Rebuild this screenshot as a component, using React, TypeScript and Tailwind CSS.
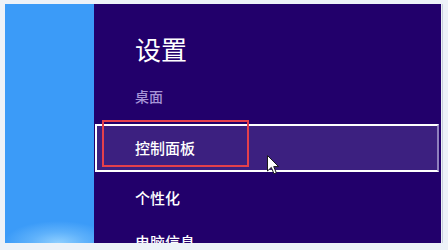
import React from "react";

export default function App() {
  return (
    <div
      className="relative w-[448px] h-[250px] overflow-hidden bg-[#edf2f8] pt-[4px] pl-[5px]"
      style={{ fontFamily: '"Noto Sans CJK SC", "Noto Sans", sans-serif' }}
    >
      <div className="flex w-[436px] h-[239px] overflow-hidden">
        <div className="w-[89px] shrink-0 bg-[#3b9bf8] bg-[radial-gradient(ellipse_55px_22px_at_60%_100%,#8fcfff_0%,#5eb1fb_50%,transparent_100%)]" />
        <div className="flex-1 flex flex-col bg-[#22006b] pt-[30px]">
          <div className="pl-[41px] text-[26px] leading-[30px] font-normal text-white">设置</div>
          <div className="mt-[22px] pl-[41px] text-[14px] leading-[20px] font-medium text-[#a693d6]">桌面</div>
          <div className="mt-[18px] ml-[1px] mr-[2px] h-[48px] shrink-0 flex items-center border-2 border-white border-r-[#8f80bd] bg-[#3c2080] pl-[38px] text-[15px] leading-[20px] font-medium text-white">
            控制面板
          </div>
          <div className="mt-[16px] pl-[41px] text-[15px] leading-[20px] font-medium text-white">个性化</div>
          <div className="mt-[24px] pl-[41px] text-[15px] leading-[20px] font-medium text-white">电脑信息</div>
        </div>
      </div>
      <div className="absolute left-[442px] top-[4px] w-[1px] h-[239px] bg-[#c9d1dc]" />
      <div className="absolute left-[102px] top-[120px] w-[147px] h-[47px] border-2 border-[#e5404b]" />
      <svg
        className="absolute left-[267px] top-[155px]"
        width="13"
        height="20"
        viewBox="0 0 13 20"
      >
        <path
          d="M0.5 0.5 L0.5 16 L4.3 12.4 L7 18.8 L9.3 17.8 L6.7 11.6 L11.6 11.6 Z"
          fill="#ffffff"
          stroke="#1a1a1a"
          strokeWidth="1"
          strokeLinejoin="round"
        />
      </svg>
    </div>
  );
}
